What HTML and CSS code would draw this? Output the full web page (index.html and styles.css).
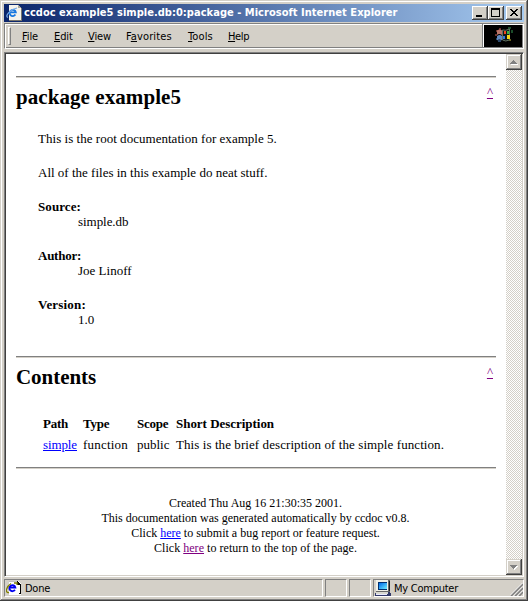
FILE: index.html
```html
<!DOCTYPE html>
<html lang="en">
<head>
<meta charset="utf-8">
<title>ccdoc example5 simple.db:0:package</title>
<link rel="stylesheet" href="styles.css">
</head>
<body>
<svg width="0" height="0" class="defs" aria-hidden="true">
  <defs>
    <linearGradient id="screen" x1="0" y1="0" x2="1" y2="1"><stop offset="0" stop-color="#0068e8"/><stop offset="1" stop-color="#70f0ff"/></linearGradient>
  </defs>
</svg>
<div class="window">
  <header class="titlebar">
    <svg class="icon" viewBox="0 0 16 16" shape-rendering="crispEdges">
      <path d="M3 0h9l3 3v12H3z" fill="#f4f2ec"/><path d="M12 0v3h3z" fill="#a8a8a0"/><path d="M3 15h12V3h1v13H3z" fill="#77746c"/>
      <g shape-rendering="auto" fill="none"><path d="M9.4 9.6A3.1 3.1 0 1 1 9.8 7.3H4" stroke="#1878e0" stroke-width="1.8"/><path d="M2 12.5C-2 11 5 4 11 3" stroke="#74a8e8" stroke-width="1.2"/></g>
    </svg>
    <h1 class="title">ccdoc example5 simple.db:0:package - Microsoft Internet Explorer</h1>
    <div class="controls">
      <span class="button"><svg viewBox="0 0 16 14" shape-rendering="crispEdges"><path d="M4 9h6v2H4z"/></svg></span>
      <span class="button"><svg viewBox="0 0 16 14" shape-rendering="crispEdges"><path d="M3 2h9v9H3zM4 4v6h7V4z" fill-rule="evenodd"/></svg></span>
      <span class="button close"><svg viewBox="0 0 16 14" shape-rendering="crispEdges"><path d="M4 3h2v1h1v1h2V4h1V3h2v1h-1v1h-1v1H9v1h1v1h1v1h1v1h-2V9H9V8H7v1H6v1H4V9h1V8h1V7h1V6H6V5H5V4H4z"/></svg></span>
    </div>
  </header>

  <nav class="menubar">
    <span class="grip"></span>
    <div class="menus">
      <span class="m-file"><u>F</u>ile</span>
      <span class="m-edit"><u>E</u>dit</span>
      <span class="m-view"><u>V</u>iew</span>
      <span class="m-fav">F<u>a</u>vorites</span>
      <span class="m-tools"><u>T</u>ools</span>
      <span class="m-help"><u>H</u>elp</span>
    </div>
    <div class="brand">
      <svg viewBox="0 0 38 22">
        <path d="M12 5h2v2h-2zM15 3h2v2h-2zM11 9h2v2h-2z" fill="#6a302c"/><path d="M12 13h2v2h-2zM14 15h3v2h-3z" fill="#2a4668"/><path d="M24 2h3v2h-3zM27 5h2v3h-2z" fill="#1c4c2a"/><path d="M25 14h2v2h-2z" fill="#66601e"/>
        <path d="M13 5.5q3-2 5 0v4.500q-3-2-5 0z" fill="#b87468"/><path d="M13 11q3-2 5 0v4.500q-3-2-5 0z" fill="#6088c0"/>
        <path d="M18.500 5q3 1 7-1v11q-4 2-7 0z" fill="#101818" stroke="#607060"/>
        <path d="M20 6h2v3h-2z" fill="#f04820"/><path d="M23 6h2v3h-2z" fill="#38b040"/><path d="M19 11h2v3h-2z" fill="#3478e0"/><path d="M23 10h3v4h-3z" fill="#f8d818"/>
      </svg>
    </div>
  </nav>

  <div class="viewport">
    <main class="page">
      <hr>
      <section class="section package">
        <div class="heading"><h2 class="h-package">package example5</h2><a class="visited top" href="#">^</a></div>
        <div class="doc">
          <p class="intro">This is the root documentation for example 5.</p>
          <p>All of the files in this example do neat stuff.</p>
          <dl>
            <dt>Source:</dt><dd class="db">simple.db</dd>
            <dt class="author">Author:</dt><dd>Joe Linoff</dd>
            <dt class="version">Version:</dt><dd>1.0</dd>
          </dl>
        </div>
      </section>
      <hr>
      <section class="section contents">
        <div class="heading"><h2 class="h-contents">Contents</h2><a class="visited top" href="#">^</a></div>
        <table>
          <colgroup><col class="c-path"><col class="c-type"><col class="c-scope"><col></colgroup>
          <tr><th>Path</th><th>Type</th><th>Scope</th><th class="desc-head">Short Description</th></tr>
          <tr><td class="name"><a href="#">simple</a></td><td class="kind">function</td><td>public</td><td class="desc">This is the brief description of the simple function.</td></tr>
        </table>
      </section>
      <hr>
      <footer>
        <p>Created Thu Aug 16 21:30:35 2001.</p>
        <p>This documentation was generated automatically by ccdoc v0.8.</p>
        <p>Click <a href="#">here</a> to submit a bug report or feature request.</p>
        <p class="return">Click <a class="visited" href="#">here</a> to return to the top of the page.</p>
      </footer>
    </main>
    <div class="scrollbar">
      <span class="button arrow"><svg viewBox="0 0 16 16" shape-rendering="crispEdges"><path d="M5 10h7v1H5z" fill="#fff"/><path d="M7 6h1v1h1v1h1v1h1v1H4V9h1V8h1V7h1z" fill="#808080"/></svg></span>
      <span class="button arrow"><svg viewBox="0 0 16 16" shape-rendering="crispEdges"><path d="M5 7h7v1h-1v1h-1v1H9v1H8v-1z" fill="#fff"/><path d="M4 6h7v1h-1v1H9v1H8v1H7V9H6V8H5V7H4z" fill="#808080"/></svg></span>
    </div>
  </div>

  <div class="statusbar">
    <div class="pane message">
      <svg class="icon" viewBox="0 0 16 16" shape-rendering="crispEdges">
        <path d="M3 1h9l3 3v11H3z" fill="#fff"/><path d="M11 1h1v1h1v1h1v1h1v10h-2v-1h1V5h-3z" fill="#000"/><path d="M3 1h8v1H3z" fill="#c0c0c0"/>
        <g shape-rendering="auto" fill="none"><path d="M8.900 9.800A3 3 0 1 1 9.300 7.500H4" stroke="#0000f0" stroke-width="1.900"/><path d="M3 12.500C-2 13 1 6 5 3.500M8 3h3v2" stroke="#808000" stroke-width="1.300"/></g>
      </svg>
      <span class="done">Done</span>
    </div>
    <div class="pane small"></div>
    <div class="pane small"></div>
    <div class="pane zone">
      <svg class="icon" viewBox="0 0 16 16" shape-rendering="crispEdges">
        <path d="M1 0h13l1 1v10l-1 1H1z" fill="#686868"/><path d="M1 0h12v11H1z" fill="#f0f0e8"/><path d="M3 2h9v8H3z" fill="#003070"/><path d="M4 3h8v6H4z" fill="url(#screen)"/><path d="M14 1h1v10h-1z" fill="#202020"/>
        <path d="M1 12h13l2 2v2H0v-2z" fill="#303868"/><path d="M1 12h12v2H1z" fill="#d8d8d0"/><path d="M1 14h11v1H1z" fill="#e8e8ff"/>
      </svg>
      <span class="computer">My Computer</span>
      <svg class="resize" viewBox="0 0 13 13"><path d="M1 13L13 1M5 13L13 5M9 13L13 9" stroke="#808080" stroke-width="1.8"/><path d="M0 12.5L12.5 0M3.6 12.8L13 3.4M7.6 12.8L13 7.4" stroke="#fff" stroke-width=".9"/></svg>
    </div>
  </div>
</div>
</body>
</html>
```
FILE: styles.css
```css
* { box-sizing: border-box; }
body { margin: 0; overflow: hidden; background: #d4d0c8; }
.defs { position: absolute; }
.window {
  width: 528px; height: 601px; padding: 4px; background: #d4d0c8;
  display: flex; flex-direction: column;
  font: 11px/14px "DejaVu Sans Condensed", "DejaVu Sans", sans-serif; color: #000;
  box-shadow: inset -1px -1px #404040, inset 1px 1px #d4d0c8, inset -2px -2px #808080, inset 2px 2px #fff;
}
.icon { display: block; flex: none; width: 16px; height: 16px; }

.titlebar { height: 18px; margin-bottom: 1px; padding: 0 2px; display: flex; align-items: center; background: linear-gradient(90deg, #0a246a, #a6caf0); }
.title { margin: 0 0 0 2px; flex: 1; font-size: 11px; line-height: 14px; font-weight: bold; letter-spacing: .03px; color: #fff; white-space: nowrap; }
.controls { display: flex; }
.button { display: block; width: 16px; height: 14px; background: #d4d0c8; box-shadow: inset -1px -1px #404040, inset 1px 1px #fff, inset -2px -2px #808080; }
.button svg { display: block; width: 100%; height: 100%; }
.close { margin-left: 2px; }

.menubar { height: 26px; margin-bottom: 3px; display: flex; border: 1px solid; border-color: #808080 #fff #fff #808080; box-shadow: inset 1px 1px #fff, inset -1px -1px #808080; }
.grip { width: 3px; height: 18px; margin: 3px 0 0 3px; border: 1px solid; border-color: #fff #808080 #808080 #fff; }
.menus { flex: 1; margin-left: 11px; padding-top: 6px; display: flex; white-space: nowrap; }
.menus span { flex: none; }
.menus u { text-underline-offset: 1px; text-decoration-thickness: 1px; }
.m-file { width: 32px; letter-spacing: -.1px; }
.m-edit { width: 34px; letter-spacing: -.1px; }
.m-view { width: 38px; letter-spacing: -.1px; }
.m-fav { width: 62px; letter-spacing: .12px; }
.m-tools { width: 40px; letter-spacing: .12px; }
.m-help { letter-spacing: -.35px; }
.brand { width: 41px; padding: 1px 1px 1px 1px; border-left: 1px solid #808080; }
.brand svg { display: block; width: 38px; height: 22px; background: #000; box-shadow: -1px 0 #fff; }

.viewport { height: 525px; margin-bottom: 2px; display: flex; border: 1px solid; border-color: #808080 #fff #fff #808080; box-shadow: inset 1px 1px #404040, inset -1px -1px #d4d0c8; padding: 1px; }
.page { flex: 1; padding: 22px 10px 0; background: #fff; font: 13px/15px "Liberation Serif", serif; overflow: hidden; white-space: nowrap; }
.page hr { height: 2px; margin: 0; border: 0; border-top: 1px solid #808080; background: #d4d0c8; }
.page p { margin: 0; }
a { color: #00f; text-decoration: underline; }
a.visited { color: #800080; }
.heading { height: 24px; display: flex; justify-content: space-between; }
h2 { margin: 0; font-size: 21px; line-height: 24px; font-weight: bold; }
.h-package { letter-spacing: .07px; }
.h-contents { letter-spacing: -.05px; }
.top { margin: -1px 3px 0 0; line-height: 15px; text-underline-offset: 2px; text-decoration-thickness: 1px; }
.package { height: 278px; padding-top: 7px; }
.doc { padding: 22px 0 0 22px; }
.page .doc p { margin-bottom: 19px; }
.page .intro { letter-spacing: .03px; }
dl { margin: 0; }
dt { font-weight: bold; letter-spacing: .09px; }
dd { margin: 0 0 19px 40px; }
.db { letter-spacing: -.05px; }
.author { letter-spacing: -.25px; }
.version { letter-spacing: .19px; }
.contents { height: 109px; padding-top: 7px; }
table { margin: 24px 0 0 27px; width: 440px; table-layout: fixed; border-collapse: collapse; }
th, td { height: 21px; padding: 0; text-align: left; vertical-align: middle; }
th { letter-spacing: -.27px; }
.c-path { width: 40px; }
.c-type { width: 54px; }
.c-scope { width: 39px; }
.desc-head { letter-spacing: -.03px; }
.name { letter-spacing: -.11px; }
.kind { letter-spacing: .21px; }
.desc { letter-spacing: .077px; }
footer { margin-top: 27px; padding-right: 1px; text-align: center; font-size: 12px; }
.page .return { letter-spacing: .04px; }

.scrollbar { width: 16px; display: flex; flex-direction: column; justify-content: space-between; background: repeating-conic-gradient(#fff 0 25%, #d4d0c8 0 50%) 0 0 / 2px 2px; }
.arrow { height: 16px; box-shadow: inset -1px -1px #404040, inset 1px 1px #d4d0c8, inset -2px -2px #808080, inset 2px 2px #fff; }

.statusbar { height: 18px; display: flex; gap: 2px; }
.pane { display: flex; border: 1px solid; border-color: #808080 #fff #fff #808080; }
.message { width: 319px; padding-left: 1px; }
.small { width: 22px; }
.zone { flex: 1; padding-left: 1px; }
.done { margin: 2px 0 0 3px; letter-spacing: -.25px; }
.computer { margin: 2px 0 0 3px; letter-spacing: -.25px; white-space: nowrap; }
.resize { width: 13px; height: 13px; margin: 3px 0 0 auto; }
```
